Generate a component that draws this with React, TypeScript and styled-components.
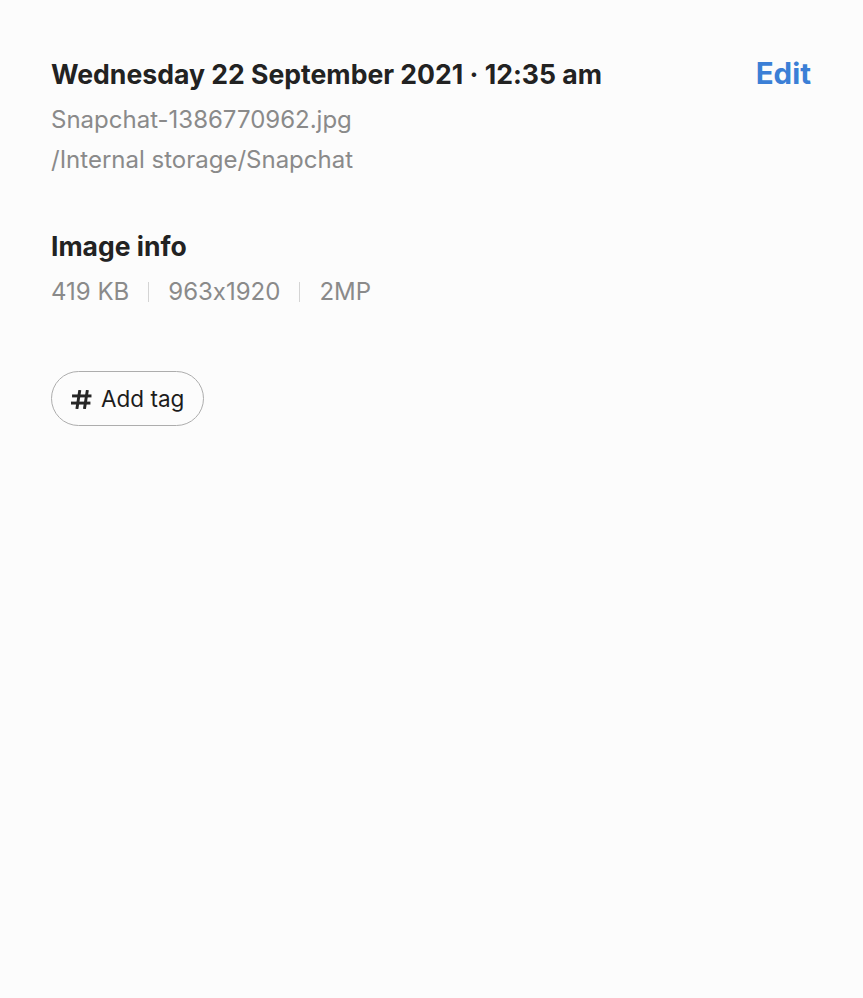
import React from "react";
import styled, { createGlobalStyle } from "styled-components";

const Global = createGlobalStyle`
  html, body { margin: 0; padding: 0; background: #fcfcfc; }
  body {
    font-family: Inter, "Noto Sans", sans-serif;
    font-feature-settings: "calt" 0;
    -webkit-font-smoothing: antialiased;
  }
`;

const Page = styled.div`
  width: 863px;
  height: 998px;
  box-sizing: border-box;
  padding: 55px 52px 0 51px;
  background: #fcfcfc;
  display: flex;
  flex-direction: column;
`;

const HeaderRow = styled.div`
  display: flex;
  align-items: baseline;
  justify-content: space-between;
`;

const Title = styled.h1`
  margin: 0;
  font-size: 26.6px;
  line-height: 36px;
  font-weight: 700;
  color: #222222;
`;

const EditLink = styled.button`
  border: none;
  background: none;
  padding: 0;
  font-family: inherit;
  font-size: 29.5px;
  font-weight: 700;
  color: #3b7fd6;
  cursor: pointer;
`;

const SubList = styled.div`
  margin-top: 8px;
  display: flex;
  flex-direction: column;
`;

const Sub = styled.div`
  font-size: 24px;
  line-height: 40px;
  color: #8a8a8a;
`;

const Section = styled.section<{ $top: number }>`
  margin-top: ${(p) => p.$top}px;
  display: flex;
  flex-direction: column;
  gap: 8px;
`;

const SectionTitle = styled.h2`
  margin: 0;
  font-size: 26.5px;
  line-height: 36px;
  font-weight: 700;
  color: #222222;
`;

const MetaRow = styled.div`
  display: flex;
  align-items: center;
  font-size: 24px;
  line-height: 40px;
  color: #8a8a8a;
`;

const Sep = styled.span`
  width: 1px;
  height: 20px;
  background: #d4d4d4;
  margin: 0 19px;
`;

const TagButton = styled.button`
  align-self: flex-start;
  width: 153px;
  height: 55px;
  box-sizing: border-box;
  padding: 0 0 0 19px;
  border: 1px solid #adadad;
  border-radius: 28px;
  background: transparent;
  display: flex;
  align-items: center;
  gap: 9px;
  font-family: inherit;
  font-size: 22.5px;
  color: #1c1c1c;
`;

const HashIcon = styled.svg`
  width: 21px;
  height: 19px;
  flex: none;
  margin-top: 1px;
`;

export default function App() {
  return (
    <>
      <Global />
      <Page>
        <HeaderRow>
          <Title>Wednesday 22 September 2021 · 12:35 am</Title>
          <EditLink>Edit</EditLink>
        </HeaderRow>
        <SubList>
          <Sub>Snapchat-1386770962.jpg</Sub>
          <Sub>/Internal storage/Snapchat</Sub>
        </SubList>
        <Section $top={48}>
          <SectionTitle>Image info</SectionTitle>
          <MetaRow>
            <span>419 KB</span>
            <Sep />
            <span>963x1920</span>
            <Sep />
            <span>2MP</span>
          </MetaRow>
        </Section>
        <Section $top={59}>
          <TagButton>
            <HashIcon viewBox="0 0 20 18" fill="none" stroke="#262626" strokeWidth="2.8" strokeLinecap="butt">
              <line x1="8.4" y1="0" x2="5.6" y2="18" />
              <line x1="15.6" y1="0" x2="12.8" y2="18" />
              <line x1="1" y1="5.6" x2="19.5" y2="5.6" />
              <line x1="0" y1="12.4" x2="18.5" y2="12.4" />
            </HashIcon>
            Add tag
          </TagButton>
        </Section>
      </Page>
    </>
  );
}
